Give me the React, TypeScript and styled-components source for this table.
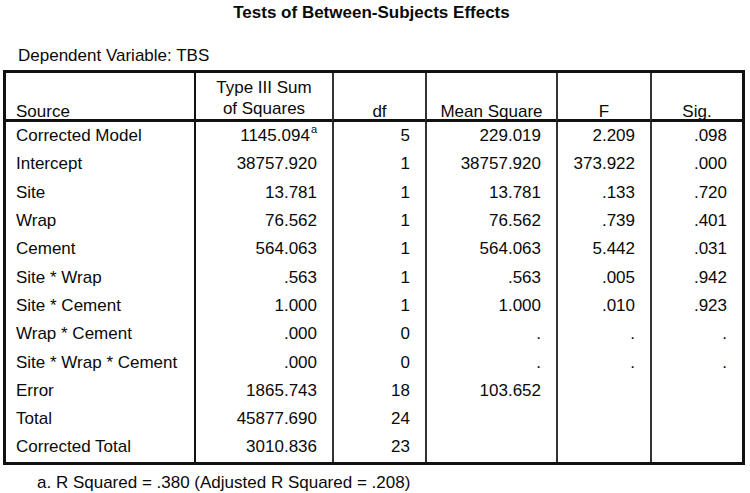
import React from "react";
import styled, { createGlobalStyle } from "styled-components";

const GlobalStyle = createGlobalStyle`
    body {
        margin: 0;
        background: #fff;
        color: #0a0a0a;
        font-family: "Liberation Sans", Arial, sans-serif;
        font-size: 17px;
    }
`;

const Page = styled.div`
    padding: 3px 0 0 3px;
`;

const Title = styled.div`
    width: 742px;
    box-sizing: border-box;
    padding-right: 5px;
    text-align: center;
    font-weight: bold;
    line-height: 20px;
`;

const Caption = styled.div`
    margin-top: 23px;
    padding-left: 15px;
    line-height: 20px;
`;

const Grid = styled.div`
    margin-top: 4px;
    width: 742px;
    box-sizing: border-box;
    border: 3px solid #111;
    display: grid;
    grid-template-columns: 188px 138px 93px 131px 94px 92px;
    grid-template-rows: 49px repeat(12, 28.3px);
`;

const HeadCell = styled.div<{ $col: number }>`
    box-sizing: border-box;
    display: flex;
    align-items: flex-end;
    justify-content: ${p => (p.$col === 0 ? "flex-start" : "center")};
    text-align: center;
    line-height: 21px;
    padding: 0 4px 0 ${p => (p.$col === 0 ? "10px" : "4px")};
    border-bottom: 3px solid #111;
    border-left: ${p => (p.$col === 0 ? "none" : p.$col === 1 ? "2px solid #111" : "2px solid #333")};
`;

const HeadText = styled.span<{ $multi: boolean }>`
    margin-bottom: ${p => (p.$multi ? "0" : "-3px")};
`;

const Cell = styled.div<{ $col: number }>`
    box-sizing: border-box;
    display: flex;
    align-items: center;
    justify-content: ${p => (p.$col === 0 ? "flex-start" : "flex-end")};
    white-space: nowrap;
    padding: 0 15px 0 ${p => (p.$col === 0 ? "10px" : "4px")};
    border-left: ${p => (p.$col === 0 ? "none" : p.$col === 1 ? "2px solid #111" : "2px solid #333")};
`;

const Sup = styled.sup`
    font-size: 11px;
    line-height: 0;
    vertical-align: 8px;
    margin-left: 1px;
`;

const Footnote = styled.div`
    margin-top: 8px;
    padding-left: 34px;
    line-height: 20px;
`;

const headers: React.ReactNode[] = [
    "Source",
    <>Type III Sum<br />of Squares</>,
    "df",
    "Mean Square",
    "F",
    "Sig.",
];

const rows: React.ReactNode[][] = [
    ["Corrected Model", <>1145.094<Sup>a</Sup></>, "5", "229.019", "2.209", ".098"],
    ["Intercept", "38757.920", "1", "38757.920", "373.922", ".000"],
    ["Site", "13.781", "1", "13.781", ".133", ".720"],
    ["Wrap", "76.562", "1", "76.562", ".739", ".401"],
    ["Cement", "564.063", "1", "564.063", "5.442", ".031"],
    ["Site * Wrap", ".563", "1", ".563", ".005", ".942"],
    ["Site * Cement", "1.000", "1", "1.000", ".010", ".923"],
    ["Wrap * Cement", ".000", "0", ".", ".", "."],
    ["Site * Wrap * Cement", ".000", "0", ".", ".", "."],
    ["Error", "1865.743", "18", "103.652", "", ""],
    ["Total", "45877.690", "24", "", "", ""],
    ["Corrected Total", "3010.836", "23", "", "", ""],
];

function App() {
    return (
        <>
            <GlobalStyle />
            <Page>
                <Title>Tests of Between-Subjects Effects</Title>
                <Caption>Dependent Variable: TBS</Caption>
                <Grid>
                    {headers.map((h, i) => (
                        <HeadCell key={"h" + i} $col={i}>
                            <HeadText $multi={i === 1}>{h}</HeadText>
                        </HeadCell>
                    ))}
                    {rows.map((row, r) =>
                        row.map((v, c) => (
                            <Cell key={r + "-" + c} $col={c}>
                                <span>{v}</span>
                            </Cell>
                        ))
                    )}
                </Grid>
                <Footnote>a. R Squared = .380 (Adjusted R Squared = .208)</Footnote>
            </Page>
        </>
    );
}

export default App;
